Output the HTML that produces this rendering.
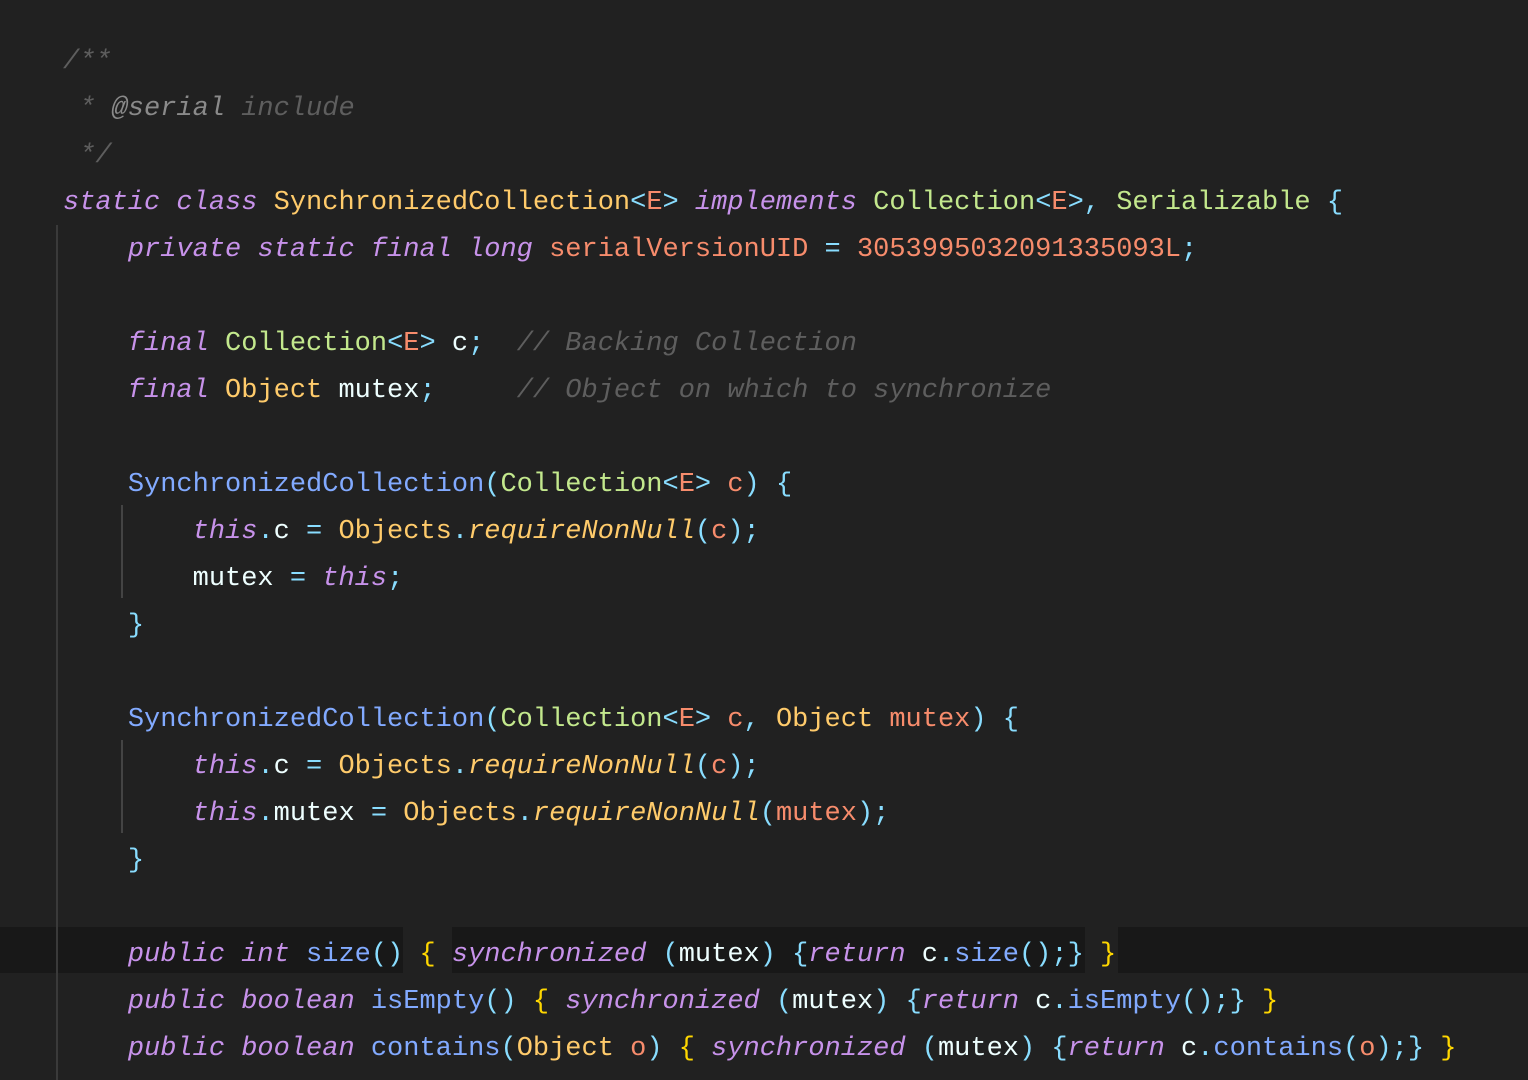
<!DOCTYPE html>
<html><head><meta charset="utf-8"><style>
html,body{margin:0;padding:0;background:#212121;width:1528px;height:1080px;overflow:hidden;position:relative}
pre{position:absolute;left:63px;top:39px;margin:0;font-family:"Liberation Mono",monospace;font-size:27px;line-height:47px;color:#eeffff;white-space:pre}
.k{color:#c792ea;font-style:italic}
.t{color:#ffcb6b}
.ti{color:#ffcb6b;font-style:italic}
.g{color:#c3e88d}
.p{color:#89ddff}
.r{color:#f78c6c}
.f{color:#82aaff}
.c{color:#5e5e5e;font-style:italic}
.cd{color:#8a8a8a;font-style:italic}
.y{color:#ffd700}
.guide{position:absolute;width:2px;background:#3a3a3a}
.hl{position:absolute;top:927px;height:46px;background:#181818}
</style></head><body>
<div class="hl" style="left:0;width:403px"></div>
<div class="hl" style="left:452px;width:633px"></div>
<div class="hl" style="left:1118px;width:410px"></div>
<div class="guide" style="left:56px;top:225px;height:855px"></div>
<div class="guide" style="left:121px;top:505px;height:93px;background:#444"></div>
<div class="guide" style="left:121px;top:740px;height:93px;background:#444"></div>
<pre><span class="c">/**</span>
<span class="c"> * </span><span class="cd">@serial</span><span class="c"> include</span>
<span class="c"> */</span>
<span class="k">static</span> <span class="k">class</span> <span class="t">SynchronizedCollection</span><span class="p">&lt;</span><span class="r">E</span><span class="p">&gt;</span> <span class="k">implements</span> <span class="g">Collection</span><span class="p">&lt;</span><span class="r">E</span><span class="p">&gt;,</span> <span class="g">Serializable</span> <span class="p">{</span>
    <span class="k">private</span> <span class="k">static</span> <span class="k">final</span> <span class="k">long</span> <span class="r">serialVersionUID</span> <span class="p">=</span> <span class="r">3053995032091335093L</span><span class="p">;</span>

    <span class="k">final</span> <span class="g">Collection</span><span class="p">&lt;</span><span class="r">E</span><span class="p">&gt;</span> c<span class="p">;</span>  <span class="c">// Backing Collection</span>
    <span class="k">final</span> <span class="t">Object</span> mutex<span class="p">;</span>     <span class="c">// Object on which to synchronize</span>

    <span class="f">SynchronizedCollection</span><span class="p">(</span><span class="g">Collection</span><span class="p">&lt;</span><span class="r">E</span><span class="p">&gt;</span> <span class="r">c</span><span class="p">)</span> <span class="p">{</span>
        <span class="k">this</span><span class="p">.</span>c <span class="p">=</span> <span class="t">Objects</span><span class="p">.</span><span class="ti">requireNonNull</span><span class="p">(</span><span class="r">c</span><span class="p">);</span>
        mutex <span class="p">=</span> <span class="k">this</span><span class="p">;</span>
    <span class="p">}</span>

    <span class="f">SynchronizedCollection</span><span class="p">(</span><span class="g">Collection</span><span class="p">&lt;</span><span class="r">E</span><span class="p">&gt;</span> <span class="r">c</span><span class="p">,</span> <span class="t">Object</span> <span class="r">mutex</span><span class="p">)</span> <span class="p">{</span>
        <span class="k">this</span><span class="p">.</span>c <span class="p">=</span> <span class="t">Objects</span><span class="p">.</span><span class="ti">requireNonNull</span><span class="p">(</span><span class="r">c</span><span class="p">);</span>
        <span class="k">this</span><span class="p">.</span>mutex <span class="p">=</span> <span class="t">Objects</span><span class="p">.</span><span class="ti">requireNonNull</span><span class="p">(</span><span class="r">mutex</span><span class="p">);</span>
    <span class="p">}</span>

    <span class="k">public</span> <span class="k">int</span> <span class="f">size</span><span class="p">()</span> <span class="y">{</span> <span class="k">synchronized</span> <span class="p">(</span>mutex<span class="p">)</span> <span class="p">{</span><span class="k">return</span> c<span class="p">.</span><span class="f">size</span><span class="p">();}</span> <span class="y">}</span>
    <span class="k">public</span> <span class="k">boolean</span> <span class="f">isEmpty</span><span class="p">()</span> <span class="y">{</span> <span class="k">synchronized</span> <span class="p">(</span>mutex<span class="p">)</span> <span class="p">{</span><span class="k">return</span> c<span class="p">.</span><span class="f">isEmpty</span><span class="p">();}</span> <span class="y">}</span>
    <span class="k">public</span> <span class="k">boolean</span> <span class="f">contains</span><span class="p">(</span><span class="t">Object</span> <span class="r">o</span><span class="p">)</span> <span class="y">{</span> <span class="k">synchronized</span> <span class="p">(</span>mutex<span class="p">)</span> <span class="p">{</span><span class="k">return</span> c<span class="p">.</span><span class="f">contains</span><span class="p">(</span><span class="r">o</span><span class="p">);}</span> <span class="y">}</span>
</pre>
</body></html>
